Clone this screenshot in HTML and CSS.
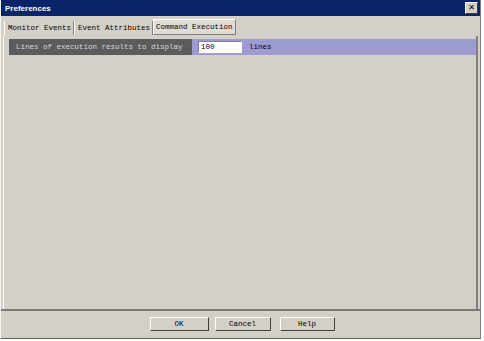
FILE: index.html
```html
<!DOCTYPE html>
<html lang="en">
<head>
    <meta charset="UTF-8">
    <title>Preferences</title>
    <link rel="stylesheet" href="styles.css">
</head>
<body>
    <div class="window">
        <div class="titlebar">
            <span class="title">Preferences</span>
            <span class="close">&#x2715;</span>
        </div>
        <div class="tabs">
            <div class="tab">Monitor Events</div>
            <div class="tab">Event Attributes</div>
            <div class="tab active">Command Execution</div>
        </div>
        <div class="panel">
            <div class="row">
                <div class="label">Lines of execution results to display</div>
                <div class="value">
                    <input type="text" class="field" value="100">
                    <span class="unit">lines</span>
                </div>
            </div>
        </div>
        <div class="footer">
            <button class="btn btn-ok">OK</button>
            <button class="btn btn-cancel">Cancel</button>
            <button class="btn btn-help">Help</button>
        </div>
    </div>
</body>
</html>
```

FILE: styles.css
```css
body {
    margin: 0;
    background: #ffffff;
    font-family: "Liberation Mono", "DejaVu Sans Mono", monospace;
    font-size: 7.5px;
    color: #000;
}
.window {
    width: 481px;
    height: 339px;
    box-sizing: border-box;
    background: #d4d0c8;
    border-left: 1px solid #f4f4f4;
    border-right: 1px solid #808080;
    border-bottom: 1px solid #606060;
    display: flex;
    flex-direction: column;
}
.titlebar {
    height: 16px;
    background: #0a246a;
    display: flex;
    align-items: center;
    justify-content: space-between;
    padding: 0 2px 0 4px;
}
.title {
    font-family: "Liberation Sans", Arial, sans-serif;
    font-weight: bold;
    font-size: 8px;
    color: #fff;
}
.close {
    width: 11px;
    height: 10px;
    background: #d4d0c8;
    border: 1px solid;
    border-color: #fff #404040 #404040 #fff;
    font-family: "DejaVu Sans", sans-serif;
    font-size: 8px;
    font-weight: bold;
    line-height: 10px;
    text-align: center;
    color: #000;
}
.tabs {
    display: flex;
    padding: 3px 0 0 3px;
    height: 16px;
}
.tab {
    padding: 0 2px 0 3px;
    line-height: 14px;
    border-left: 1px solid #fff;
    border-right: 1px solid #808080;
    margin-top: 2px;
}
.tab.active {
    margin-top: 0;
    padding: 0 2px;
    border: 1px solid #808080;
    border-top-color: #fff;
    border-left-color: #fff;
    background: #e0ddd6;
    line-height: 15px;
}
.panel {
    flex: 1;
    margin: 1px 2px 0 2px;
    border-left: 1px solid #fff;
    border-right: 2px solid #808080;
    padding: 3px 0 0 5px;
}
.row {
    display: flex;
    height: 16px;
}
.label {
    width: 176px;
    background: #5c5c5c;
    color: #d8d8d8;
    padding-left: 7px;
    line-height: 16px;
}
.value {
    flex: 1;
    background: #9c9cd0;
    display: flex;
    align-items: center;
    padding-left: 6px;
}
.field {
    width: 44px;
    height: 12px;
    box-sizing: border-box;
    border: 1px solid #808080;
    border-right-color: #fff;
    border-bottom-color: #fff;
    background: #fff;
    font: inherit;
    padding: 0 2px;
    margin: 0;
}
.unit {
    margin-left: 7px;
}
.footer {
    height: 25px;
    border-top: 2px solid #7a7a7a;
    display: flex;
    justify-content: center;
    align-items: center;
    gap: 6px;
    padding: 0 0 2px 3px;
}
.btn {
    height: 14px;
    font: inherit;
    background: #d4d0c8;
    border: 1px solid;
    border-color: #fff #404040 #404040 #fff;
    padding: 0;
    margin: 0;
}
.btn-ok { width: 59px; }
.btn-cancel { width: 56px; }
.btn-help { width: 55px; margin-left: 3px; }
```
